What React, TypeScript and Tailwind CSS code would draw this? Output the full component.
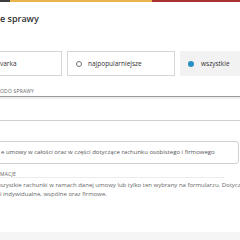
const Radio = ({ checked }: { checked?: boolean }) =>
  checked ? (
    <span className="w-[6px] h-[6px] rounded-full bg-[#2a8fc4] shrink-0" />
  ) : (
    <span className="w-[6px] h-[6px] rounded-full border border-[#777] shrink-0" />
  );

const App = () => {
  return (
    <div
      className="w-[240px] h-[240px] overflow-hidden bg-white flex flex-col text-[#333]"
      style={{ fontFamily: '"Open Sans", "Liberation Sans", sans-serif' }}
    >
      <div className="flex h-[2px] shrink-0">
        <div className="w-[10px] bg-[#3d3d3d]" />
        <div className="w-[142px] bg-[#e8b54d]" />
        <div className="flex-1 bg-[#a83232]" />
      </div>

      <p className="mt-[11px] h-[12px] leading-[12px] text-[9px] font-semibold whitespace-nowrap">e sprawy</p>

      <div className="mt-[26px] flex gap-[5px] ml-[-4px] h-[25px] shrink-0">
        <div className="w-[66px] shrink-0 border border-[#d6d6d6] flex items-center pl-[3px] text-[6.5px] whitespace-nowrap">
          varka
        </div>
        <div className="w-[108px] shrink-0 border border-[#d6d6d6] flex items-center pl-[8px] gap-[6px] text-[6.5px] whitespace-nowrap">
          <Radio />
          <span>najpopularniejsze</span>
        </div>
        <div className="w-[80px] shrink-0 bg-[#f2f2f2] flex items-center pl-[8px] gap-[7px] text-[6.5px] whitespace-nowrap">
          <Radio checked />
          <span>wszystkie</span>
        </div>
      </div>

      <p className="mt-[12px] h-[7px] leading-[7px] text-[5px] uppercase tracking-[0.2px] text-[#666] whitespace-nowrap">
        odo sprawy
      </p>
      <div className="mt-[1px] ml-[-4px] w-[250px] h-[25px] shrink-0 border border-[#cfcfcf] border-t-[#9a9a9a] shadow-[inset_0_2px_1px_#eee]" />

      <div className="mt-[20px] ml-[-4px] w-[243px] h-[23px] shrink-0 border border-[#d0d0d0] rounded-[3px] flex items-center pl-[4px] text-[6px] text-[#555] whitespace-nowrap">
        e umowy w całości oraz w części dotyczące rachunku osobistego i firmowego
      </div>

      <div className="mt-[7px] w-[224px] h-[7px] shrink-0 border-b border-[#ececec]">
        <p className="leading-[6px] text-[5px] uppercase tracking-[0.2px] text-[#666] whitespace-nowrap">macje</p>
      </div>

      <div className="mt-[3px] text-[6px] leading-[9px] text-[#666] whitespace-nowrap">
        <p>szystkie rachunki w ramach danej umowy lub tylko ten wybrany na formularzu. Dotyczy</p>
        <p>i indywidualne, wspólne oraz firmowe.</p>
      </div>

      <div className="mt-auto h-[8px] shrink-0 bg-[#f5f5f5]" />
    </div>
  );
};

export default App;
